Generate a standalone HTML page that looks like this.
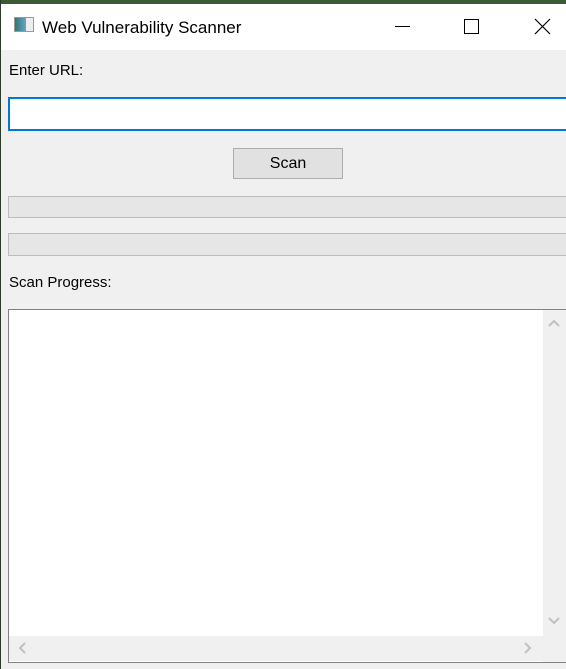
<!DOCTYPE html><html><head><style>
body{margin:0;width:566px;height:669px;overflow:hidden;background:#f0f0f0;font-family:"Liberation Sans",sans-serif;position:relative}
.a{position:absolute}
</style></head><body>
<div class="a" style="left:0;top:0;width:566px;height:4px;background:#3c5a34"></div>
<div class="a" style="left:0;top:4px;width:566px;height:46px;background:#fff"></div>
<div class="a" style="left:0;top:0;width:1px;height:669px;background:#2b3a2a"></div>
<div class="a" style="left:14px;top:17px;width:20px;height:15px;border:1px solid #999;background:linear-gradient(90deg,#2a7a7a 0,#6fa0c0 60%,#eee 60%);box-sizing:border-box"></div>
<div class="a" style="left:42px;top:18px;font-size:17px;color:#000">Web Vulnerability Scanner</div>
<div class="a" style="left:395px;top:26px;width:15px;height:1px;background:#000"></div>
<div class="a" style="left:464px;top:19px;width:15px;height:15px;border:1px solid #000;box-sizing:border-box"></div>
<svg class="a" style="left:534px;top:18px" width="17" height="17"><path d="M1 1L16 16M16 1L1 16" stroke="#000" stroke-width="1.2"/></svg>
<div class="a" style="left:9px;top:62px;font-size:15px;color:#000">Enter URL:</div>
<div class="a" style="left:8px;top:97px;width:570px;height:34px;border:2px solid #0078d7;background:#fff;box-sizing:border-box"></div>
<div class="a" style="left:233px;top:148px;width:110px;height:31px;border:1px solid #adadad;background:#e1e1e1;box-sizing:border-box;text-align:center;line-height:29px;font-size:16px">Scan</div>
<div class="a" style="left:8px;top:196px;width:570px;height:22px;border:1px solid #bcbcbc;background:#e6e6e6;box-sizing:border-box"></div>
<div class="a" style="left:8px;top:233px;width:570px;height:23px;border:1px solid #bcbcbc;background:#e6e6e6;box-sizing:border-box"></div>
<div class="a" style="left:9px;top:274px;font-size:15px;color:#000">Scan Progress:</div>
<div class="a" style="left:8px;top:309px;width:570px;height:354px;border:1px solid #828282;border-right:none;background:#fff;box-sizing:border-box"></div>
<div class="a" style="left:543px;top:310px;width:23px;height:352px;background:#f0f0f0"></div>
<div class="a" style="left:9px;top:636px;width:557px;height:25px;background:#f0f0f0"></div>
<svg class="a" style="left:547px;top:318px" width="14" height="10"><path d="M2 8L7 3L12 8" stroke="#c0c0c0" stroke-width="2" fill="none"/></svg>
<svg class="a" style="left:547px;top:616px" width="14" height="10"><path d="M2 2L7 7L12 2" stroke="#c0c0c0" stroke-width="2" fill="none"/></svg>
<svg class="a" style="left:17px;top:641px" width="10" height="14"><path d="M8 2L3 7L8 12" stroke="#c0c0c0" stroke-width="2" fill="none"/></svg>
<svg class="a" style="left:523px;top:641px" width="10" height="14"><path d="M2 2L7 7L2 12" stroke="#c0c0c0" stroke-width="2" fill="none"/></svg>
</body></html>
